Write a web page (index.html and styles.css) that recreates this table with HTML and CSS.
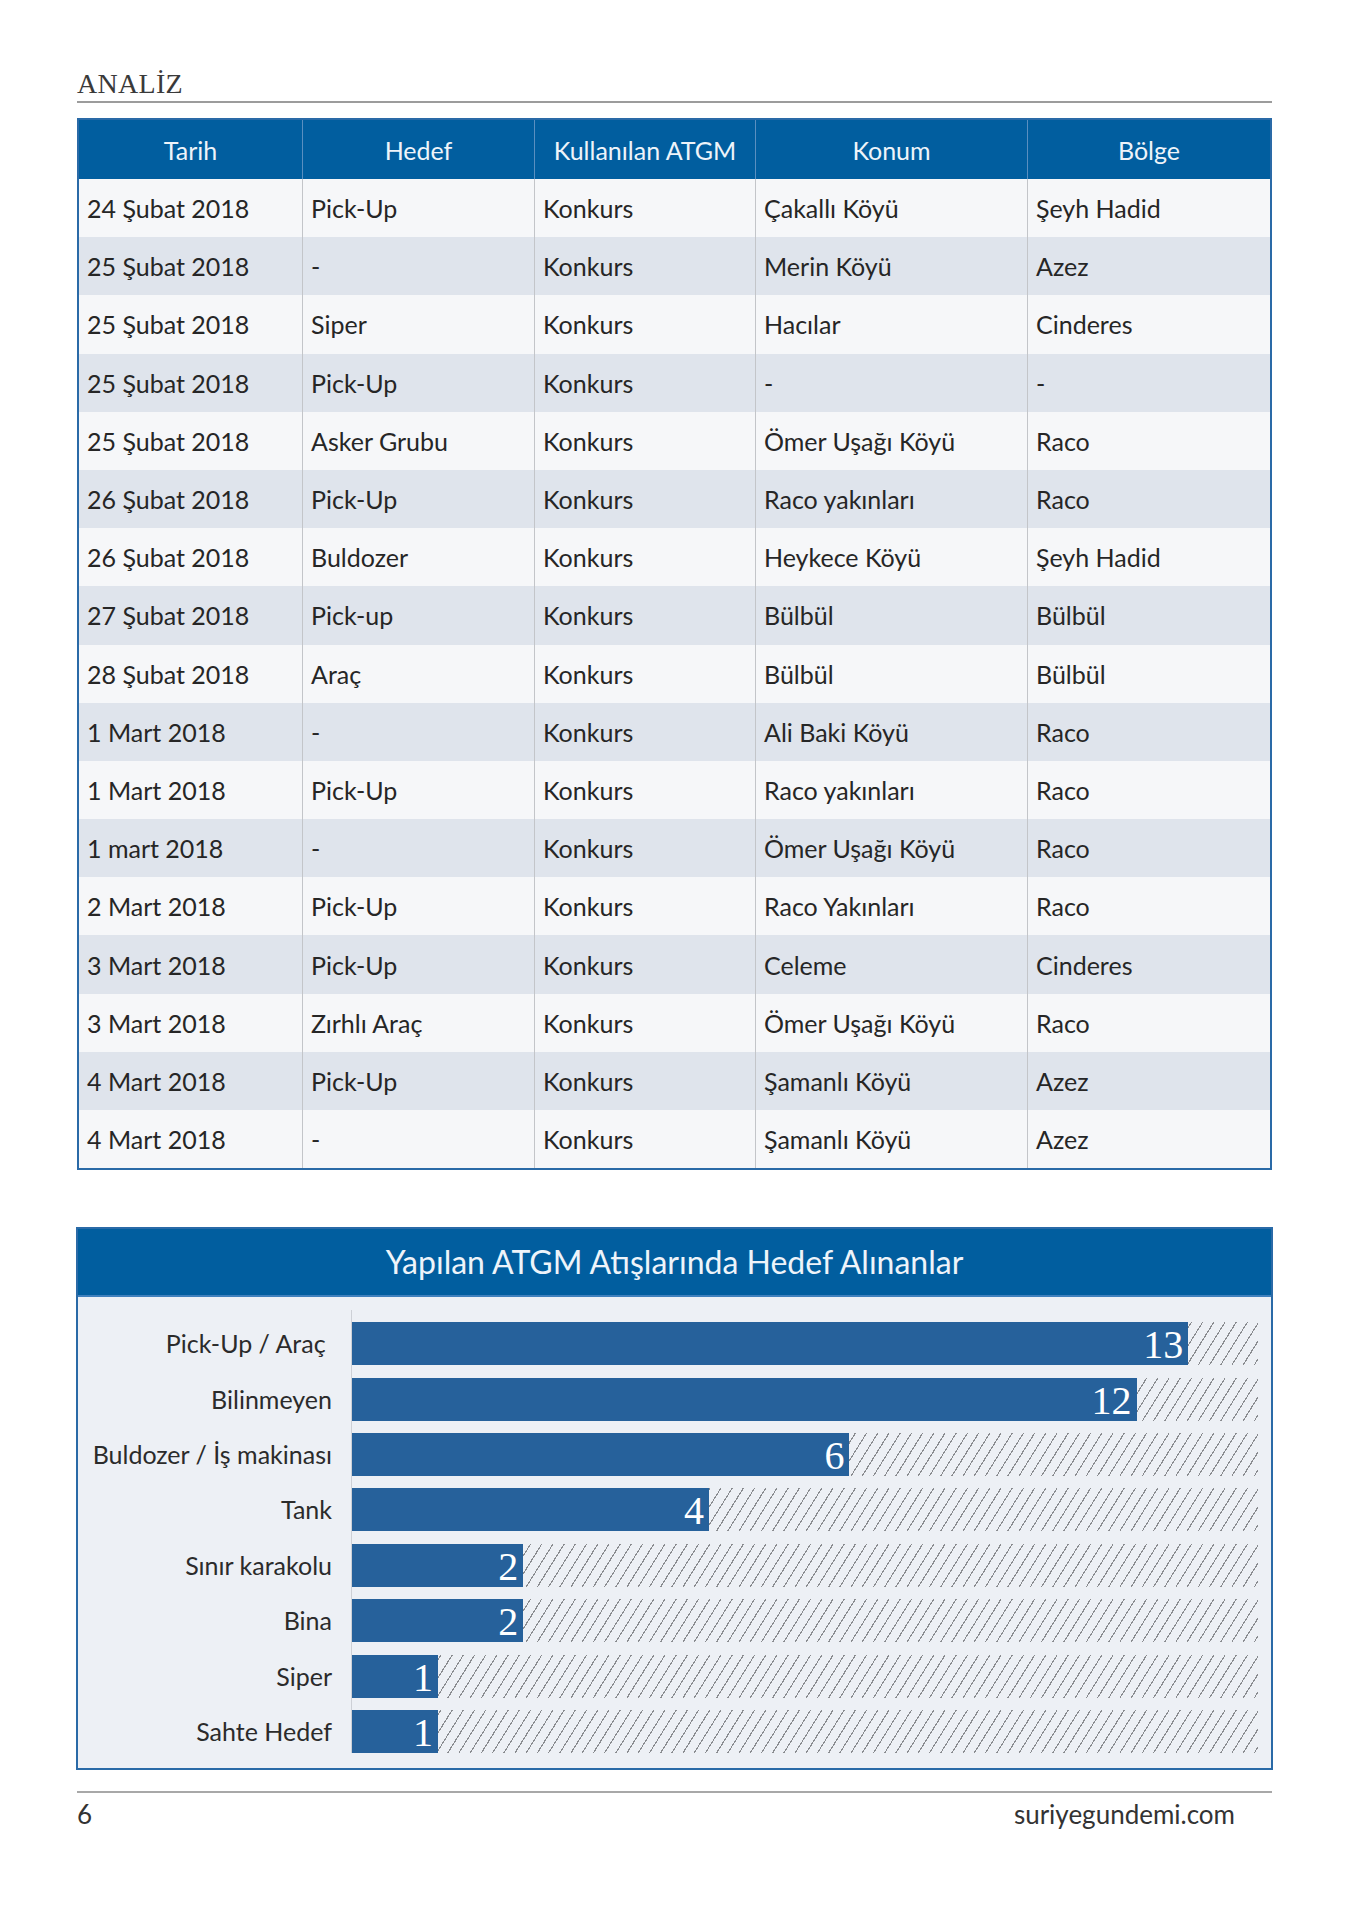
FILE: index.html
```html
<!DOCTYPE html>
<html lang="tr">
<head>
<meta charset="utf-8">
<title>Analiz</title>
<link rel="stylesheet" href="styles.css">
</head>
<body>
<div class="page">
  <header class="running-head">ANALİZ</header>

  <table class="atgm">
    <colgroup>
      <col class="c1"><col class="c2"><col class="c3"><col class="c4"><col class="c5">
    </colgroup>
    <thead>
      <tr><th>Tarih</th><th>Hedef</th><th>Kullanılan ATGM</th><th>Konum</th><th>Bölge</th></tr>
    </thead>
    <tbody>
      <tr><td>24 Şubat 2018</td><td>Pick-Up</td><td>Konkurs</td><td>Çakallı Köyü</td><td>Şeyh Hadid</td></tr>
      <tr><td>25 Şubat 2018</td><td>-</td><td>Konkurs</td><td>Merin Köyü</td><td>Azez</td></tr>
      <tr><td>25 Şubat 2018</td><td>Siper</td><td>Konkurs</td><td>Hacılar</td><td>Cinderes</td></tr>
      <tr><td>25 Şubat 2018</td><td>Pick-Up</td><td>Konkurs</td><td>-</td><td>-</td></tr>
      <tr><td>25 Şubat 2018</td><td>Asker Grubu</td><td>Konkurs</td><td>Ömer Uşağı Köyü</td><td>Raco</td></tr>
      <tr><td>26 Şubat 2018</td><td>Pick-Up</td><td>Konkurs</td><td>Raco yakınları</td><td>Raco</td></tr>
      <tr><td>26 Şubat 2018</td><td>Buldozer</td><td>Konkurs</td><td>Heykece Köyü</td><td>Şeyh Hadid</td></tr>
      <tr><td>27 Şubat 2018</td><td>Pick-up</td><td>Konkurs</td><td>Bülbül</td><td>Bülbül</td></tr>
      <tr><td>28 Şubat 2018</td><td>Araç</td><td>Konkurs</td><td>Bülbül</td><td>Bülbül</td></tr>
      <tr><td>1 Mart 2018</td><td>-</td><td>Konkurs</td><td>Ali Baki Köyü</td><td>Raco</td></tr>
      <tr><td>1 Mart 2018</td><td>Pick-Up</td><td>Konkurs</td><td>Raco yakınları</td><td>Raco</td></tr>
      <tr><td>1 mart 2018</td><td>-</td><td>Konkurs</td><td>Ömer Uşağı Köyü</td><td>Raco</td></tr>
      <tr><td>2 Mart 2018</td><td>Pick-Up</td><td>Konkurs</td><td>Raco Yakınları</td><td>Raco</td></tr>
      <tr><td>3 Mart 2018</td><td>Pick-Up</td><td>Konkurs</td><td>Celeme</td><td>Cinderes</td></tr>
      <tr><td>3 Mart 2018</td><td>Zırhlı Araç</td><td>Konkurs</td><td>Ömer Uşağı Köyü</td><td>Raco</td></tr>
      <tr><td>4 Mart 2018</td><td>Pick-Up</td><td>Konkurs</td><td>Şamanlı Köyü</td><td>Azez</td></tr>
      <tr><td>4 Mart 2018</td><td>-</td><td>Konkurs</td><td>Şamanlı Köyü</td><td>Azez</td></tr>
    </tbody>
  </table>

  <section class="chart">
    <h2 class="chart-title">Yapılan ATGM Atışlarında Hedef Alınanlar</h2>
    <div class="chart-body">
      <div class="chart-row"><div class="chart-label">Pick-Up / Araç&nbsp;</div><div class="chart-track"><div class="hatch"><div class="bar" style="width:92.3%">13</div></div></div></div>
      <div class="chart-row"><div class="chart-label">Bilinmeyen</div><div class="chart-track"><div class="hatch"><div class="bar" style="width:86.6%">12</div></div></div></div>
      <div class="chart-row"><div class="chart-label">Buldozer / İş makinası</div><div class="chart-track"><div class="hatch"><div class="bar" style="width:54.9%">6</div></div></div></div>
      <div class="chart-row"><div class="chart-label">Tank</div><div class="chart-track"><div class="hatch"><div class="bar" style="width:39.4%">4</div></div></div></div>
      <div class="chart-row"><div class="chart-label">Sınır karakolu</div><div class="chart-track"><div class="hatch"><div class="bar" style="width:18.9%">2</div></div></div></div>
      <div class="chart-row"><div class="chart-label">Bina</div><div class="chart-track"><div class="hatch"><div class="bar" style="width:18.9%">2</div></div></div></div>
      <div class="chart-row"><div class="chart-label">Siper</div><div class="chart-track"><div class="hatch"><div class="bar" style="width:9.5%">1</div></div></div></div>
      <div class="chart-row"><div class="chart-label">Sahte Hedef</div><div class="chart-track"><div class="hatch"><div class="bar" style="width:9.5%">1</div></div></div></div>
    </div>
  </section>

  <footer class="page-foot">
    <span class="page-num">6</span>
    <span class="site">suriyegundemi.com</span>
  </footer>
</div>
</body>
</html>
```

FILE: styles.css
```css
html, body {
  margin: 0;
  padding: 0;
  background: #ffffff;
}

body {
  font-family: Lato, "Noto Sans", sans-serif;
  color: #2b2b2b;
}

.page {
  width: 1195px;
  margin-left: 77px;
  display: flex;
  flex-direction: column;
}

.running-head {
  font-family: "Liberation Serif", serif;
  font-size: 28px;
  letter-spacing: 0.3px;
  line-height: 30px;
  color: #3a3a3a;
  padding-top: 69px;
  padding-bottom: 2px;
  border-bottom: 2px solid #9c9c9c;
  margin-bottom: 15px;
}

/* ---------- table ---------- */
.atgm {
  width: 1195px;
  table-layout: fixed;
  border-collapse: separate;
  border-spacing: 0;
  border: 2px solid #2a6aa7;
  font-size: 25px;
}

.atgm .c1 { width: 223px; }
.atgm .c2 { width: 232px; }
.atgm .c3 { width: 221px; }
.atgm .c4 { width: 272px; }
.atgm .c5 { width: 243px; }

.atgm th {
  height: 59px;
  padding: 0;
  background: #015e9f;
  color: #eef4fa;
  font-weight: normal;
  text-align: center;
  border-left: 1px solid #5a8fc0;
}

.atgm td {
  height: 58.2px;
  padding: 0 0 0 8px;
  border-left: 1px solid #c3c5c9;
  text-align: left;
  white-space: nowrap;
  color: #262626;
}

.atgm th:first-child,
.atgm td:first-child {
  border-left: none;
}

.atgm tbody tr:nth-child(odd) td {
  background: #f6f7f9;
}

.atgm tbody tr:nth-child(even) td {
  background: #dfe4ec;
}

/* ---------- chart ---------- */
.chart {
  width: 1197px;
  margin: 57px 0 0 -1px;
  box-sizing: border-box;
  border: 2px solid #2a6aa7;
  background: #edf0f5;
}

.chart-title {
  margin: 0;
  height: 68px;
  box-sizing: border-box;
  line-height: 66px;
  background: #015e9f;
  border-bottom: 2px solid #3f80bd;
  color: #eef4fa;
  font-size: 32px;
  font-weight: normal;
  text-align: center;
}

.chart-body {
  padding: 13px 13px 15px 0;
}

.chart-row {
  display: flex;
  height: 55.4px;
}

.chart-label {
  width: 273px;
  box-sizing: border-box;
  padding: 12px 19px 0 0;
  text-align: right;
  font-size: 25px;
  line-height: 43px;
  white-space: nowrap;
  color: #2b2b2b;
}

.chart-track {
  width: 906px;
  border-left: 1px solid #cdd0d6;
  padding-top: 12px;
}

.hatch {
  height: 43px;
  background: repeating-linear-gradient(122deg, rgba(0,0,0,0) 0 8.4px, #8a8c90 8.4px 9.5px);
}

.bar {
  height: 43px;
  box-sizing: border-box;
  padding-right: 5px;
  background: #26619b;
  color: #ffffff;
  text-align: right;
  font-family: "Liberation Serif", serif;
  font-size: 40px;
  line-height: 45px;
}

/* ---------- footer ---------- */
.page-foot {
  margin-top: 21px;
  border-top: 2px solid #a8a8a8;
  padding: 6px 37px 0 0;
  display: flex;
  justify-content: space-between;
  font-size: 26px;
  line-height: 30px;
  color: #333333;
}
```
